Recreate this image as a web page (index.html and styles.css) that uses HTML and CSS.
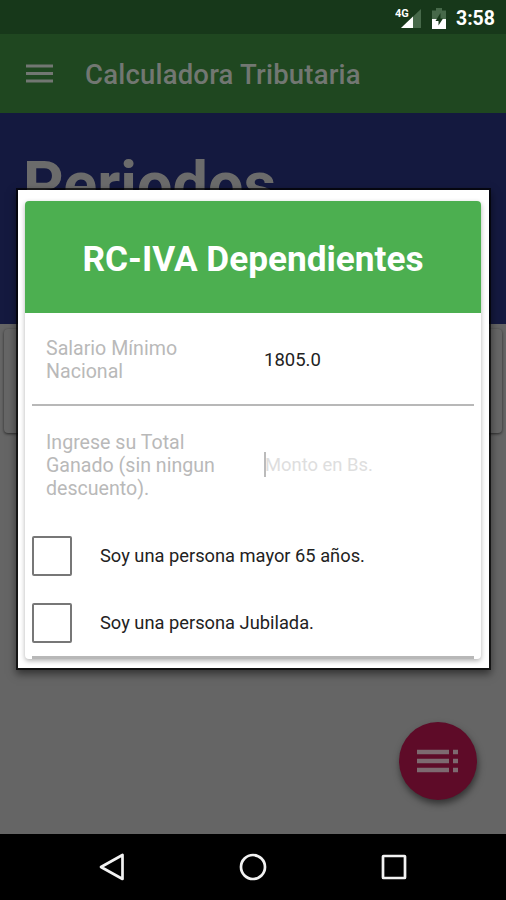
FILE: index.html
```html
<!DOCTYPE html>
<html lang="es">
<head>
  <meta charset="UTF-8" />
  <meta name="viewport" content="width=device-width, initial-scale=1.0"/>
  <title>Calculadora Tributaria</title>
  <link rel="stylesheet" href="styles.css">
</head>
<body>
  <div class="status-bar">
    <svg class="signal" width="27" height="22" viewBox="0 0 27 22">
      <path d="M26 2V21H6z" fill="#47694a"/>
      <path d="M18 9.500V21H6z" fill="#fff"/>
      <text class="network" x="0" y="10">4G</text>
    </svg>
    <svg class="battery" width="14" height="21" viewBox="0 0 14 21">
      <path d="M4 0h6v2.500h4V12H0V2.500h4z" fill="#47694a"/>
      <path d="M0 11h14v10H0z" fill="#fff"/>
      <path d="M8.500 5L3.500 13H6.500V17.500L11 10.500H8.500z" fill="#17381a"/>
    </svg>
    <span class="clock">3:58</span>
  </div>

  <header class="toolbar">
    <svg class="menu-icon" width="27" height="19" viewBox="0 0 27 19">
      <path d="M0 2H27M0 9.500H27M0 17H27" stroke="#727772" stroke-width="3"/>
    </svg>
    <span class="toolbar-title">Calculadora Tributaria</span>
  </header>

  <div class="banner">
    <h1>Periodos</h1>
  </div>

  <main class="content">
    <div class="period-card"></div>
    <button class="fab" aria-label="Lista">
      <svg width="42" height="24" viewBox="0 0 42 24">
        <path d="M0 3H32M0 12H32M0 21H32M36 3H41M36 12H41M36 21H41" stroke="#7d6a70" stroke-width="4.500"/>
      </svg>
    </button>
  </main>

  <nav class="nav-bar">
    <svg width="28" height="30" viewBox="0 0 28 30">
      <path d="M24.500 3V27L3 15z" fill="none" stroke="#f2f2f2" stroke-width="2.700" stroke-linejoin="round"/>
    </svg>
    <svg width="28" height="30" viewBox="0 0 28 30">
      <circle cx="14" cy="15" r="12" fill="none" stroke="#f2f2f2" stroke-width="2.700"/>
    </svg>
    <svg width="28" height="30" viewBox="0 0 28 30">
      <rect x="3" y="4" width="22" height="22" rx="0.500" fill="none" stroke="#f2f2f2" stroke-width="2.700"/>
    </svg>
  </nav>

  <div class="dialog">
    <form class="card">
      <h2>RC-IVA Dependientes</h2>
      <div class="row">
        <label>Salario Mínimo<br>Nacional</label>
        <span class="value">1805.0</span>
      </div>
      <div class="row row-total">
        <label>Ingrese su Total<br>Ganado (sin ningun<br>descuento).</label>
        <span class="amount">Monto en Bs.</span>
      </div>
      <div class="check-row">
        <span class="checkbox"></span>
        <span class="check-text">Soy una persona mayor 65 años.</span>
      </div>
      <div class="check-row">
        <span class="checkbox"></span>
        <span class="check-text">Soy una persona Jubilada.</span>
      </div>
      <div class="card-end"></div>
    </form>
  </div>
</body>
</html>
```
FILE: styles.css
```css
* {
  box-sizing: border-box;
}

body {
  margin: 0;
  height: 900px;
  position: relative;
  display: flex;
  flex-direction: column;
  overflow: hidden;
  font-family: Roboto, sans-serif;
  background: #656565;
}

.status-bar {
  height: 34px;
  padding: 2px 11px 0 0;
  display: flex;
  justify-content: flex-end;
  align-items: center;
  background: #17381a;
  color: #fff;
}

.signal {
  margin-right: 10px;
}

.network {
  font-size: 11px;
  font-weight: bold;
  fill: #fff;
}

.battery {
  margin-right: 10px;
}

.clock {
  font-size: 19.5px;
  font-weight: bold;
}

.toolbar {
  height: 79px;
  padding: 2px 0 0 26px;
  display: flex;
  align-items: center;
  background: #1f4720;
}

.menu-icon {
  margin: 0 32px 2px 0;
}

.toolbar-title {
  font-size: 27.5px;
  font-weight: 500;
  letter-spacing: 0.2px;
  color: #727772;
}

.banner {
  height: 211px;
  padding: 36px 23px 0;
  background: #14193f;
}

.banner h1 {
  margin: 0;
  font-size: 63px;
  line-height: 72px;
  color: #6b6b6b;
}

.content {
  flex: 1;
  display: flex;
  flex-direction: column;
  justify-content: space-between;
  align-items: flex-end;
  padding: 5px 4px 34px;
}

.period-card {
  align-self: stretch;
  height: 104px;
  border-radius: 4px;
  background: #666;
  box-shadow: 0 1px 3px rgba(0, 0, 0, 0.6);
}

.fab {
  width: 78px;
  height: 78px;
  margin-right: 25px;
  padding: 0;
  display: flex;
  justify-content: center;
  align-items: center;
  border: none;
  border-radius: 50%;
  background: #5e0b28;
  box-shadow: 1px 4px 7px rgba(0, 0, 0, 0.5);
}

.nav-bar {
  height: 66px;
  display: flex;
  justify-content: center;
  align-items: center;
  gap: 113px;
  background: #000;
}

.dialog {
  position: absolute;
  left: 18px;
  top: 190px;
  width: 471px;
  height: 478px;
  padding: 11px 8px 9px 7px;
  background: #fff;
  box-shadow: 0 0 0 2px rgba(0, 0, 0, 0.7), 0 4px 8px 2px rgba(0, 0, 0, 0.5);
}

.card {
  height: 458px;
  display: flex;
  flex-direction: column;
  border-radius: 4px;
  background: #fff;
  box-shadow: 0 2px 5px rgba(0, 0, 0, 0.3);
}

.card h2 {
  margin: 0;
  height: 112px;
  padding-top: 2px;
  border-radius: 4px 4px 0 0;
  background: #4caf50;
  color: #fff;
  font-size: 35.2px;
  line-height: 112px;
  text-align: center;
}

.row {
  height: 93px;
  margin: 0 7px;
  padding: 3px 0 0 14px;
  display: grid;
  grid-template-columns: 218px 1fr;
  align-items: center;
  border-bottom: 2px solid #b8b8b8;
}

.row-total {
  height: 117px;
  padding-top: 1px;
  border-bottom: none;
}

.row label {
  padding-top: 1px;
  font-size: 19.6px;
  line-height: 23px;
  color: #b9b9b9;
}

.value {
  font-size: 18.5px;
  color: #222;
}

.amount {
  height: 25px;
  border-left: 2px solid #bbb;
  font-size: 18.4px;
  line-height: 26px;
  text-indent: -1px;
  color: #dedede;
}

.check-row {
  height: 67px;
  padding-left: 7px;
  display: flex;
  align-items: center;
}

.checkbox {
  width: 40px;
  height: 40px;
  margin-right: 28px;
  border: 2px solid #777;
  border-radius: 2px;
}

.check-text {
  padding-bottom: 1px;
  font-size: 18.3px;
  color: #222;
}

.card-end {
  height: 3px;
  margin: auto 7px 0;
  background: #b8b8b8;
}
```
